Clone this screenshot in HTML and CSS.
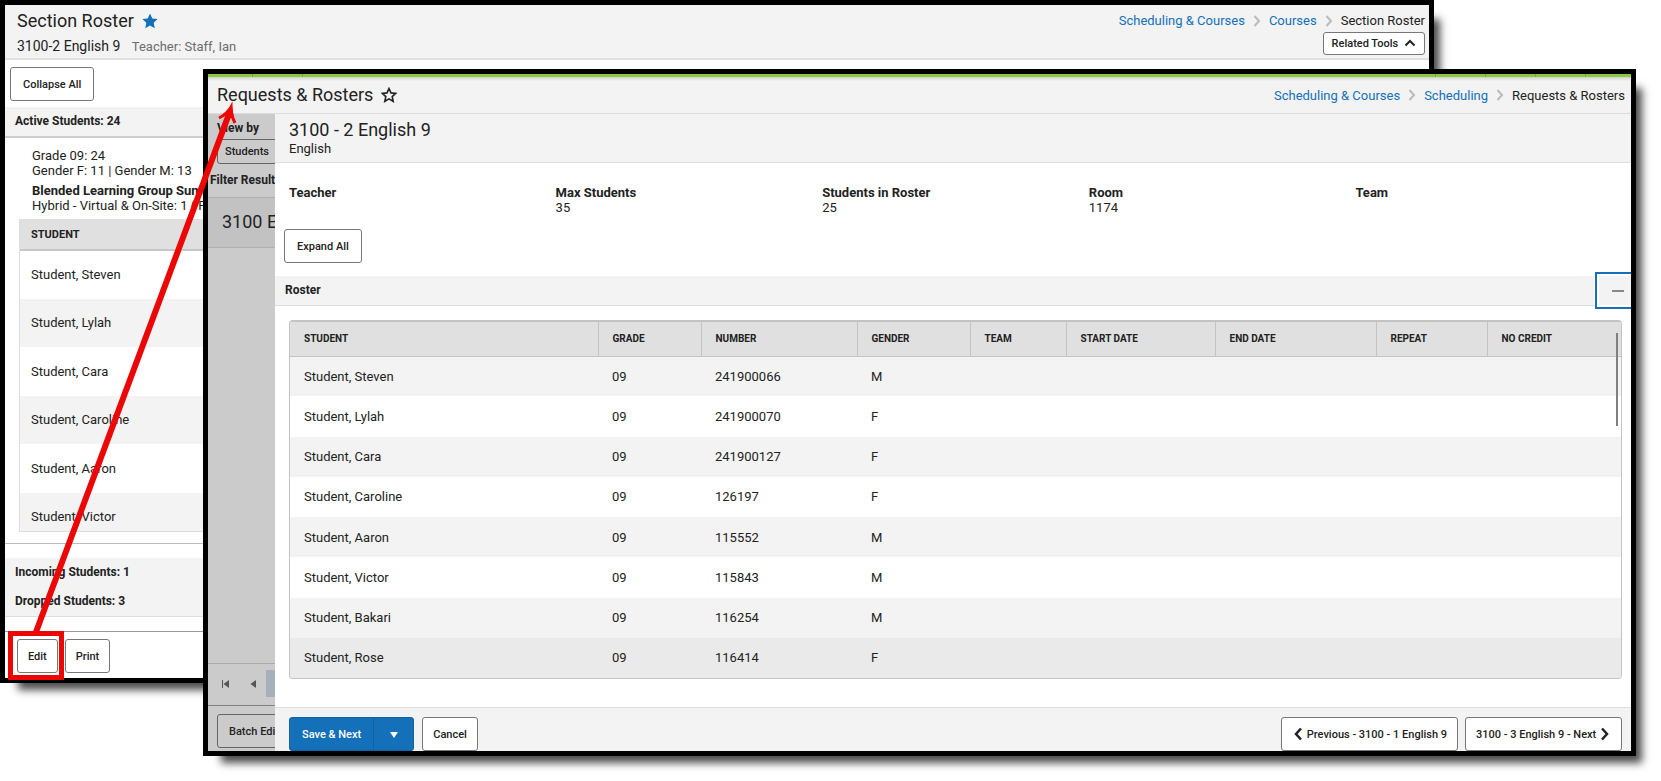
FILE: index.html
```html
<!DOCTYPE html>
<html lang="en">
<head>
  <meta charset="UTF-8">
  <title>Section Roster</title>
  <link rel="stylesheet" href="styles.css">
</head>
<body>
  <div class="desktop">

    <!-- Section Roster -->
    <main class="window section-window">
      <header class="section-header">
        <div>
          <h1 class="title">Section Roster
            <svg class="star" viewBox="0 0 16 16" width="16" height="16"><path d="M8 .5l2.3 4.9 5.3.7-3.9 3.7 1 5.4L8 12.6l-4.7 2.6 1-5.4L.4 6.1l5.3-.7z" fill="#1370b9"/></svg>
          </h1>
          <p class="section-name">3100-2 English 9 <span>Teacher: Staff, Ian</span></p>
        </div>
        <div class="header-right">
          <nav class="breadcrumb">
            <a href="#">Scheduling &amp; Courses</a>
            <svg viewBox="0 0 8 12" width="8" height="12"><path d="M1.500 1L6 6l-4.500 5"/></svg>
            <a href="#">Courses</a>
            <svg viewBox="0 0 8 12" width="8" height="12"><path d="M1.500 1L6 6l-4.500 5"/></svg>
            <span>Section Roster</span>
          </nav>
          <button class="btn btn-small">Related Tools
            <svg class="chevron" viewBox="0 0 12 8" width="12" height="8"><path d="M1.500 6.500L6 2l4.500 4.500"/></svg>
          </button>
        </div>
      </header>

      <div class="toolbar"><button class="btn">Collapse All</button></div>

      <h2 class="bar">Active Students: 24</h2>
      <section class="active-panel">
        <div class="summary">
          <p>Grade 09: 24</p>
          <p>Gender F: 11 | Gender M: 13</p>
          <p class="group">Blended Learning Group Summary</p>
          <p>Hybrid - Virtual &amp; On-Site: 1 ( F:</p>
        </div>
        <div class="student-list">
          <table>
            <thead><tr><th>STUDENT</th></tr></thead>
            <tbody>
              <tr><td>Student, Steven</td></tr>
              <tr><td>Student, Lylah</td></tr>
              <tr><td>Student, Cara</td></tr>
              <tr><td>Student, Caroline</td></tr>
              <tr><td>Student, Aaron</td></tr>
              <tr><td>Student, Victor</td></tr>
            </tbody>
          </table>
        </div>
      </section>

      <div class="other-students">
        <h2>Incoming Students: 1</h2>
        <h2>Dropped Students: 3</h2>
      </div>

      <footer class="section-footer">
        <button class="btn">Edit</button>
        <button class="btn">Print</button>
      </footer>
    </main>

    <!-- Requests & Rosters -->
    <div class="window requests-window">
      <div class="green-strip"><i></i><i></i><i></i><i></i><i></i><i></i></div>
      <header class="requests-header">
        <h1 class="title">Requests &amp; Rosters
          <svg class="star" viewBox="0 0 16 16" width="16" height="16"><path d="M8 1.500l2 4.400 4.700.5-3.500 3.200 1 4.700L8 11.900l-4.200 2.400 1-4.700-3.500-3.200 4.700-.5z" fill="none" stroke="#222" stroke-width="1.600"/></svg>
        </h1>
        <nav class="breadcrumb">
          <a href="#">Scheduling &amp; Courses</a>
          <svg viewBox="0 0 8 12" width="8" height="12"><path d="M1.500 1L6 6l-4.500 5"/></svg>
          <a href="#">Scheduling</a>
          <svg viewBox="0 0 8 12" width="8" height="12"><path d="M1.500 1L6 6l-4.500 5"/></svg>
          <span>Requests &amp; Rosters</span>
        </nav>
      </header>

      <div class="requests-body">
        <aside class="sidebar">
          <label class="view-label" for="view-by">View by</label>
          <select class="view-select" id="view-by"><option>Students</option></select>
          <h2 class="filter-title">Filter Results</h2>
          <div class="result">3100 English 9</div>
          <div class="pager">
            <svg viewBox="0 0 8 8" width="8" height="8"><path d="M0 0h1v8H0zM7 0v8L1.500 4z"/></svg>
            <svg viewBox="0 0 8 8" width="8" height="8"><path d="M7 0v8L1.500 4z"/></svg>
            <span class="page"></span>
          </div>
          <div class="batch"><button class="btn">Batch Edit</button></div>
        </aside>

        <section class="panel">
          <div class="panel-header">
            <h2>3100 - 2 English 9</h2>
            <p>English</p>
          </div>

          <dl class="info">
            <div><dt>Teacher</dt><dd></dd></div>
            <div><dt>Max Students</dt><dd>35</dd></div>
            <div><dt>Students in Roster</dt><dd>25</dd></div>
            <div><dt>Room</dt><dd>1174</dd></div>
            <div><dt>Team</dt><dd></dd></div>
          </dl>

          <div class="expand"><button class="btn">Expand All</button></div>

          <div class="roster-bar">
            <h3>Roster</h3>
            <button class="collapse" aria-label="Collapse"><span></span></button>
          </div>

          <div class="roster">
            <table>
              <colgroup>
                <col class="c-student"><col class="c-grade"><col class="c-number">
                <col class="c-gender"><col class="c-team"><col class="c-start">
                <col class="c-end"><col class="c-repeat"><col class="c-credit">
              </colgroup>
              <thead>
                <tr>
                  <th>STUDENT</th><th>GRADE</th><th>NUMBER</th><th>GENDER</th><th>TEAM</th>
                  <th>START DATE</th><th>END DATE</th><th>REPEAT</th><th>NO CREDIT</th>
                </tr>
              </thead>
              <tbody>
                <tr><td>Student, Steven</td><td>09</td><td>241900066</td><td>M</td><td></td><td></td><td></td><td></td><td></td></tr>
                <tr><td>Student, Lylah</td><td>09</td><td>241900070</td><td>F</td><td></td><td></td><td></td><td></td><td></td></tr>
                <tr><td>Student, Cara</td><td>09</td><td>241900127</td><td>F</td><td></td><td></td><td></td><td></td><td></td></tr>
                <tr><td>Student, Caroline</td><td>09</td><td>126197</td><td>F</td><td></td><td></td><td></td><td></td><td></td></tr>
                <tr><td>Student, Aaron</td><td>09</td><td>115552</td><td>M</td><td></td><td></td><td></td><td></td><td></td></tr>
                <tr><td>Student, Victor</td><td>09</td><td>115843</td><td>M</td><td></td><td></td><td></td><td></td><td></td></tr>
                <tr><td>Student, Bakari</td><td>09</td><td>116254</td><td>M</td><td></td><td></td><td></td><td></td><td></td></tr>
                <tr class="hover"><td>Student, Rose</td><td>09</td><td>116414</td><td>F</td><td></td><td></td><td></td><td></td><td></td></tr>
              </tbody>
            </table>
            <div class="scrollbar"></div>
          </div>

          <footer class="panel-footer">
            <div class="split">
              <button class="btn btn-primary">Save &amp; Next</button>
              <button class="btn btn-primary btn-arrow" aria-label="More save options">
                <svg viewBox="0 0 8 6" width="8" height="6"><path d="M0 0h8L4 6z" fill="#fff"/></svg>
              </button>
            </div>
            <button class="btn btn-compact">Cancel</button>
            <div class="paging">
              <button class="btn btn-compact">
                <svg class="chevron bold" viewBox="0 0 8 14" width="8" height="14"><path d="M7 1.500L2 7l5 5.500"/></svg>
                Previous - 3100 - 1 English 9
              </button>
              <button class="btn btn-compact">3100 - 3 English 9 - Next
                <svg class="chevron bold" viewBox="0 0 8 14" width="8" height="14"><path d="M1 1.500L6 7l-5 5.500"/></svg>
              </button>
            </div>
          </footer>
        </section>
      </div>
    </div>

    <!-- Red callout from Edit to the second screen -->
    <svg class="callout" viewBox="0 0 260 700" width="260" height="700">
      <g fill="none" stroke="#ec0707">
        <rect x="10.500" y="633.500" width="51" height="44" stroke-width="5"/>
        <path d="M36 632L229 114" stroke-width="6"/>
        <path d="M219 118q8-4 12-11q0 8 4 16" stroke-width="3"/>
      </g>
      <path d="M232 105l2 14-10-3z" fill="#ec0707"/>
    </svg>
  </div>
</body>
</html>
```

FILE: styles.css
```css
* {
  box-sizing: border-box;
}

body {
  margin: 0;
  background: #fff;
  color: #222;
  font-family: Roboto, sans-serif;
  font-size: 13px;
  line-height: 15px;
}

h1, h2, h3, p, dl, dd {
  margin: 0;
}

a {
  color: #1370b9;
  text-decoration: none;
}

table {
  width: 100%;
  border-collapse: collapse;
  table-layout: fixed;
}

.desktop {
  position: relative;
  min-height: 781px;
}

.window {
  border: 5px solid #000;
  background: #fff;
  overflow: hidden;
  box-shadow: 12px 13px 8px -6px rgba(0, 0, 0, 0.7);
}

.title {
  display: flex;
  align-items: center;
  gap: 8px;
  font-size: 18px;
  line-height: 24px;
  font-weight: 400;
}

.title .star {
  margin-top: -1px;
}

/* buttons */
.btn {
  height: 34px;
  padding: 0 12px;
  border: 1px solid #777;
  border-radius: 3px;
  background: #fff;
  color: #222;
  font-family: inherit;
  font-size: 11px;
  font-weight: 500;
  white-space: nowrap;
}

.btn-small {
  height: 23px;
  padding: 0 8px;
}

.btn-compact,
.section-footer .btn {
  padding: 0 10px;
}

.chevron {
  margin-left: 3px;
  fill: none;
  stroke: #222;
  stroke-width: 2;
}

.chevron.bold {
  margin: 0 2px;
  stroke-width: 2.5;
  vertical-align: -3px;
}

.breadcrumb {
  display: flex;
  align-items: center;
  gap: 8px;
}

.breadcrumb svg {
  fill: none;
  stroke: #bbb;
  stroke-width: 2;
}

/* Section Roster window */
.section-window {
  margin-right: 227px;
}

.section-header {
  display: flex;
  justify-content: space-between;
  height: 55px;
  padding: 4px 4px 0 12px;
  background: #f3f3f3;
  border-bottom: 2px solid #e0e0e0;
}

.section-name {
  margin-top: 6px;
  font-size: 14px;
}

.section-name span {
  margin-left: 8px;
  color: #6d6d6d;
  font-size: 13px;
}

.header-right {
  display: flex;
  flex-direction: column;
  align-items: flex-end;
  gap: 4px;
  padding-top: 4px;
}

.toolbar {
  padding: 7px 5px 6px;
  line-height: 0;
}

.bar,
.other-students h2 {
  padding: 7px 10px;
  background: #f3f3f3;
  font-size: 12px;
  line-height: 15px;
}

.active-panel {
  padding: 10px 0 11px 14px;
  border-top: 2px solid #ccc;
  border-bottom: 1px solid #bbb;
}

.summary {
  padding: 0 0 6px 13px;
}

.summary .group {
  margin-top: 5px;
  font-weight: 700;
}

.student-list {
  height: 313px;
  border: 1px solid #ddd;
  border-top: none;
  overflow: hidden;
}

.student-list table {
  height: 322px;
}

.student-list th {
  height: 31px;
  padding: 0 11px;
  background: #e0e0e0;
  border-bottom: 2px solid #c6c6c6;
  font-size: 11px;
  text-align: left;
}

.student-list td {
  height: 48px;
  padding: 0 11px;
}

.student-list tr:nth-child(even) td {
  background: #f3f3f3;
}

.other-students {
  margin-top: 14px;
  border-bottom: 1px solid #ddd;
}

.section-footer {
  display: flex;
  gap: 7px;
  margin-top: 14px;
  padding: 7px 12px 5px;
  border-top: 1px solid #999;
}

/* Requests & Rosters window */
.requests-window {
  position: absolute;
  top: 69px;
  left: 203px;
  right: 25px;
}

.green-strip {
  display: flex;
  justify-content: flex-end;
  gap: 49px;
  height: 3px;
  padding-right: 45px;
  background: #8dc63f;
}

.green-strip i {
  width: 1px;
  background: #76a834;
}

.green-strip i:nth-child(1) {
  margin-left: 44px;
}

.green-strip i:nth-child(2) {
  margin-right: auto;
}

.requests-header {
  display: flex;
  justify-content: space-between;
  align-items: center;
  height: 37px;
  padding: 0 6px 0 9px;
  background: linear-gradient(#d0d0d0, #f3f3f3 4px);
  border-bottom: 1px solid #ddd;
}

.requests-body {
  display: flex;
}

.sidebar {
  flex: 0 0 67px;
  display: flex;
  flex-direction: column;
  background: #cbcbcb;
  overflow: hidden;
  white-space: nowrap;
}

.view-label {
  padding: 7px 9px 3px;
  font-size: 12px;
  font-weight: 700;
}

.view-select {
  appearance: none;
  flex: none;
  width: 90px;
  height: 25px;
  margin-left: 9px;
  padding: 0 7px;
  border: 1px solid #666;
  border-radius: 3px;
  background: transparent;
  color: #222;
  font-family: inherit;
  font-size: 11px;
  font-weight: 500;
}

.filter-title {
  padding: 9px 2px;
  font-size: 12px;
  line-height: 15px;
}

.result {
  padding: 12px 14px 13px;
  border-top: 1px solid #b0b0b0;
  border-bottom: 1px solid #b0b0b0;
  background: #c2c2c2;
  font-size: 18px;
  line-height: 24px;
}

.pager {
  display: flex;
  align-items: center;
  height: 42px;
  margin-top: auto;
  padding: 0 0 2px 14px;
  border-top: 1px solid #aaa;
  fill: #555;
}

.pager svg {
  flex: none;
  margin-right: 19px;
}

.pager .page {
  flex: none;
  width: 27px;
  height: 27px;
  margin-left: -10px;
  background: #a5b0ba;
}

.batch {
  padding: 8px 9px 3px;
  border-top: 1px solid #808080;
}

.batch .btn {
  padding: 0 11px;
  border-color: #666;
  background: transparent;
}

/* section detail panel */
.panel {
  flex: 1;
  min-width: 0;
}

.panel-header {
  padding: 5px 14px 6px;
  background: #f3f3f3;
  border-bottom: 1px solid #ddd;
}

.panel-header h2 {
  font-size: 18px;
  line-height: 22px;
  font-weight: 400;
}

.info {
  display: grid;
  grid-template-columns: repeat(5, 1fr);
  padding: 22px 9px 14px 14px;
}

.info dt {
  font-weight: 700;
}

.info dd {
  min-height: 15px;
}

.expand {
  padding: 0 9px 13px;
  line-height: 0;
}

.roster-bar {
  display: flex;
  align-items: center;
  justify-content: space-between;
  height: 30px;
  padding-left: 10px;
  background: #f3f3f3;
  border-bottom: 1px solid #ddd;
}

.roster-bar h3 {
  font-size: 12px;
}

.collapse {
  display: flex;
  align-items: center;
  justify-content: flex-end;
  width: 36px;
  height: 37px;
  margin: -4px 0;
  padding: 0 7px 0 0;
  border: 2px solid #1370b9;
  border-right: none;
  background: #f3f3f3;
  box-shadow: inset 2px 0 0 #fff, inset 0 2px 0 #fff, inset 0 -2px 0 #fff, 0 0 0 1px #fff;
}

.collapse span {
  width: 12px;
  height: 2px;
  background: #888;
}

.roster {
  position: relative;
  margin: 14px 9px 28px 14px;
  border: 1px solid #c3c3c3;
  border-top-width: 2px;
  border-radius: 4px;
  overflow: hidden;
}

.roster table {
  height: 356px;
}

.roster th {
  height: 34px;
  padding: 0 14px;
  border-right: 1px solid #c3c3c3;
  border-bottom: 1px solid #c3c3c3;
  background: #e0e0e0;
  font-size: 10px;
  text-align: left;
}

.roster th:last-child {
  border-right: none;
}

.roster td {
  height: 40px;
  padding: 0 14px;
}

.roster tbody tr:nth-child(odd) {
  background: #f3f3f3;
}

.roster tbody .hover {
  background: #eaeaea;
}

.c-student { width: 308px; }
.c-grade { width: 103px; }
.c-number { width: 156px; }
.c-gender { width: 113px; }
.c-team { width: 96px; }
.c-start { width: 149px; }
.c-end { width: 161px; }
.c-repeat { width: 111px; }
.c-credit { width: 134px; }

.scrollbar {
  position: absolute;
  top: 11px;
  right: 3px;
  width: 2px;
  height: 93px;
  background: #808080;
}

.panel-footer {
  display: flex;
  gap: 8px;
  padding: 9px 9px 0 14px;
  background: #f3f3f3;
  border-top: 1px solid #ddd;
}

.split {
  display: flex;
}

.btn-primary {
  border-color: #0f62a3;
  border-radius: 3px 0 0 3px;
  background: #1370b9;
  color: #fff;
}

.btn-arrow {
  width: 41px;
  margin-left: -1px;
  border-radius: 0 3px 3px 0;
}

.paging {
  display: flex;
  gap: 7px;
  margin-left: auto;
}

.callout {
  position: absolute;
  top: 0;
  left: 0;
  pointer-events: none;
}
```
